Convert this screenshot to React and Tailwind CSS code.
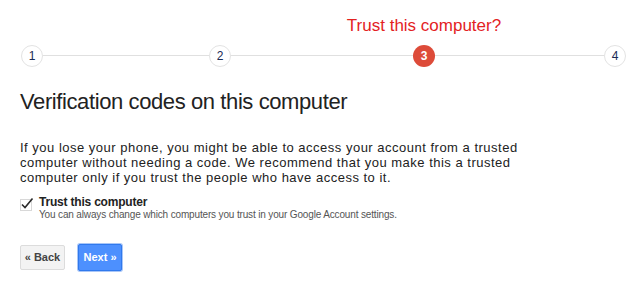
import React from 'react';

const font = { fontFamily: '"Liberation Sans", Arial, sans-serif' };

function Step({ n, active }) {
  if (active) {
    return (
      <div className="flex h-[22px] w-[22px] flex-none items-center justify-center rounded-full bg-[#dd4b39] text-[12px] font-bold text-white">
        {n}
      </div>
    );
  }
  return (
    <div className="flex h-[22px] w-[22px] flex-none items-center justify-center rounded-full border border-[#e3e3e3] bg-white text-[12px] text-[#1a2a55]">
      {n}
    </div>
  );
}

function Line({ w }) {
  return <div className={`mb-[11px] h-px flex-none bg-[#e0e0e0] ${w}`} />;
}

export default function App() {
  return (
    <div className="h-[291px] w-[640px] overflow-hidden bg-white text-[#222]" style={font}>
      <div className="flex items-end pl-[21px] pt-[16px]">
        <Step n="1" />
        <Line w="w-[166px]" />
        <Step n="2" />
        <Line w="w-[182px]" />
        <div className="flex w-[22px] flex-none flex-col items-center">
          <div className="mb-[9px] whitespace-nowrap text-[17px] leading-[20px] text-[#e3221f]">
            Trust this computer?
          </div>
          <Step n="3" active />
        </div>
        <Line w="w-[169px]" />
        <Step n="4" />
      </div>

      <div className="px-[20px]">
        <h1 className="mt-[22px] text-[22px] font-normal leading-[26px] tracking-[-0.4px] text-[#222]">
          Verification codes on this computer
        </h1>

        <p className="mt-[25px] w-[520px] text-[13px] leading-[15px] tracking-[0.5px] text-[#222]">
          If you lose your phone, you might be able to access your account from a trusted
          computer without needing a code. We recommend that you make this a trusted
          computer only if you trust the people who have access to it.
        </p>

        <div className="mt-[11px] flex items-start gap-[5px]">
          <svg width="14" height="14" viewBox="0 0 14 14" className="mt-[1px] flex-none">
            <rect x="0.5" y="2.5" width="11" height="11" fill="white" stroke="#d8d8d8" />
            <path d="M2 7.5 L5 10.5 L12.5 1.5" fill="none" stroke="#2a2a2a" strokeWidth="1.6" />
          </svg>
          <div>
            <div className="text-[12px] font-bold leading-[13px] tracking-[-0.2px] text-[#222]">Trust this computer</div>
            <div className="text-[10px] leading-[12px] tracking-[-0.15px] text-[#555]">
              You can always change which computers you trust in your Google Account settings.
            </div>
          </div>
        </div>

        <div className="mt-[24px] flex gap-[13px]">
          <button className="h-[25px] w-[45px] rounded-[2px] border border-[#dcdcdc] bg-[#f3f3f3] text-[11px] font-bold text-[#444]">
            « Back
          </button>
          <button className="-mt-px h-[27px] w-[44px] rounded-[2px] border border-[#3079ed] bg-[#4d90fe] text-[11px] font-bold text-white shadow-[0_0_0_1px_#a9c6f7]">
            Next »
          </button>
        </div>
      </div>
    </div>
  );
}
